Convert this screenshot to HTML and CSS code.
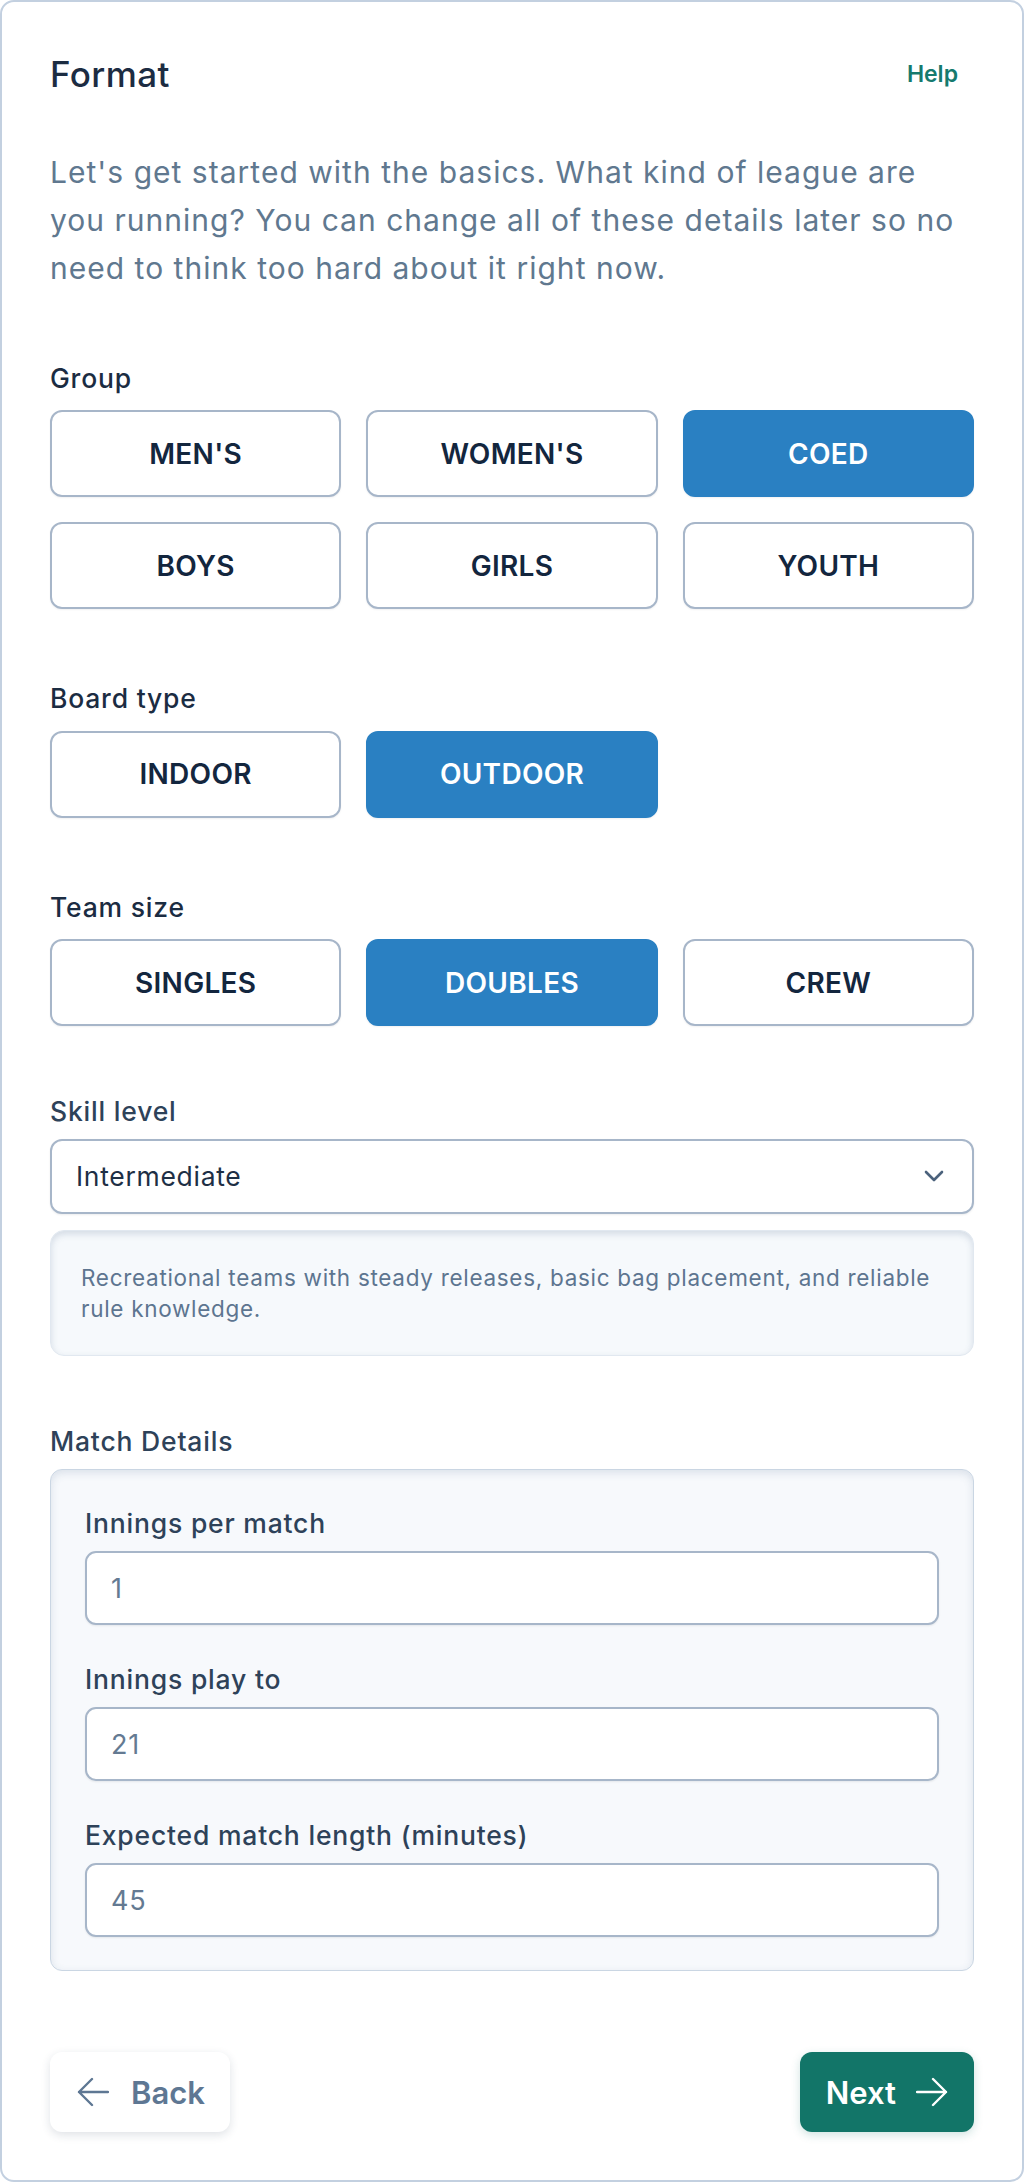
FILE: index.html
```html
<!DOCTYPE html>
<html lang="en">
<head>
<meta charset="utf-8">
<title>Format</title>
<link rel="stylesheet" href="styles.css">
</head>
<body>
<div class="card">
  <header class="head">
    <h1 class="title">Format</h1>
    <a class="help" href="#">Help</a>
  </header>
  <p class="intro">Let's get started with the basics. What kind of league are you running? You can change all of these details later so no need to think too hard about it right now.</p>

  <section class="field field-first">
    <div class="label">Group</div>
    <div class="choices">
      <button class="choice">Men's</button>
      <button class="choice">Women's</button>
      <button class="choice is-active">Coed</button>
      <button class="choice">Boys</button>
      <button class="choice">Girls</button>
      <button class="choice">Youth</button>
    </div>
  </section>

  <section class="field field-choice">
    <div class="label">Board type</div>
    <div class="choices">
      <button class="choice">Indoor</button>
      <button class="choice is-active">Outdoor</button>
    </div>
  </section>

  <section class="field field-choice">
    <div class="label">Team size</div>
    <div class="choices">
      <button class="choice">Singles</button>
      <button class="choice is-active">Doubles</button>
      <button class="choice">Crew</button>
    </div>
  </section>

  <section class="field field-form">
    <div class="label label-soft label-tight">Skill level</div>
    <div class="select">
      <span>Intermediate</span>
      <svg class="chevron" viewBox="0 0 20 12" width="20" height="12" aria-hidden="true"><polyline points="2,2 10,10 18,2" fill="none" stroke="#4b627c" stroke-width="2.6" stroke-linecap="round" stroke-linejoin="round"/></svg>
    </div>
    <div class="desc">Recreational teams with steady releases, basic bag placement, and reliable rule knowledge.</div>
  </section>

  <section class="field field-form">
    <div class="label label-soft label-tight">Match Details</div>
    <div class="panel">
      <label class="label label-soft label-tight">Innings per match</label>
      <input class="input" type="text" value="1">
      <label class="label label-soft label-tight label-gap">Innings play to</label>
      <input class="input" type="text" value="21">
      <label class="label label-soft label-tight label-gap">Expected match length (minutes)</label>
      <input class="input" type="text" value="45">
    </div>
  </section>

  <footer class="nav">
    <button class="back">
      <svg viewBox="0 0 32 30" width="32" height="30" aria-hidden="true"><path d="M15 2 L2 15 L15 28 M2 15 H31" fill="none" stroke="currentColor" stroke-width="2.4" stroke-linecap="round" stroke-linejoin="round"/></svg>
      <span>Back</span>
    </button>
    <button class="next">
      <span>Next</span>
      <svg viewBox="0 0 32 30" width="32" height="30" aria-hidden="true"><path d="M17 2 L30 15 L17 28 M30 15 H1" fill="none" stroke="currentColor" stroke-width="2.4" stroke-linecap="round" stroke-linejoin="round"/></svg>
    </button>
  </footer>
</div>
</body>
</html>
```

FILE: styles.css
```css
* {
  box-sizing: border-box;
  margin: 0;
  padding: 0;
}

html, body {
  background: #ffffff;
}

body {
  font-family: Inter, "Noto Sans", "Liberation Sans", sans-serif;
  color: #1c2c42;
}

.card {
  border: 2px solid #c3d0e0;
  border-radius: 14px;
  padding: 51px 48px 48px;
  background: #ffffff;
}

.head {
  display: flex;
  align-items: center;
  justify-content: space-between;
  height: 42px;
}

.title {
  font-size: 35px;
  line-height: 42px;
  font-weight: 500;
  letter-spacing: 0.4px;
  color: #1c2c42;
}

.help {
  font-size: 23px;
  line-height: 30px;
  font-weight: 600;
  color: #167a6e;
  text-decoration: none;
  padding: 6px 16px;
}

.intro {
  margin-top: 53px;
  font-size: 30px;
  line-height: 48px;
  letter-spacing: 1.02px;
  color: #60788f;
  max-width: 917px;
}

.field-first {
  margin-top: 67.5px;
}

.field-choice {
  margin-top: 71px;
}

.field-form {
  margin-top: 67px;
}

.label {
  display: block;
  font-size: 26.5px;
  line-height: 36px;
  font-weight: 500;
  letter-spacing: 0.8px;
  color: #1b2c42;
  margin-bottom: 14.5px;
}

.label-soft {
  color: #2e4259;
}

.label-tight {
  margin-bottom: 10px;
}

.label-gap {
  margin-top: 36px;
}

.choices {
  display: grid;
  grid-template-columns: repeat(3, 1fr);
  gap: 25px;
}

.choice {
  height: 87px;
  border: 2px solid #a7b6c9;
  border-radius: 12px;
  background: #ffffff;
  font-family: inherit;
  font-size: 28px;
  font-weight: 600;
  letter-spacing: 0.3px;
  text-transform: uppercase;
  color: #13263e;
  box-shadow: 0 1px 2px rgba(15, 23, 42, 0.06);
}

.choice.is-active {
  background: #2a80c2;
  border-color: #2a80c2;
  color: #ffffff;
}

.select {
  display: flex;
  align-items: center;
  justify-content: space-between;
  height: 74.5px;
  padding: 0 28px 0 24px;
  border: 2px solid #a7b6c9;
  border-radius: 12px;
  background: #ffffff;
  font-size: 26.5px;
  letter-spacing: 0.7px;
  color: #1e2f45;
  box-shadow: 0 1px 2px rgba(15, 23, 42, 0.08);
}

.desc {
  margin-top: 16.5px;
  padding: 31px 30px;
  background: #f6f9fc;
  border: 1px solid #e1e8f0;
  border-radius: 14px;
  box-shadow: inset 0 3px 7px rgba(71, 100, 135, 0.2);
  font-size: 22.5px;
  line-height: 31px;
  letter-spacing: 0.7px;
  color: #5d7590;
}

.panel {
  padding: 35px 34px 33px;
  background: #f7f9fc;
  border: 1px solid #cad6e3;
  border-radius: 12px;
  box-shadow: inset 0 3px 8px rgba(71, 100, 135, 0.16);
}

.input {
  display: block;
  width: 100%;
  height: 74px;
  padding: 0 24px;
  border: 2px solid #a7b6c9;
  border-radius: 11px;
  background: #ffffff;
  font-family: inherit;
  font-size: 27px;
  letter-spacing: 0.7px;
  color: #647a92;
  box-shadow: 0 1px 2px rgba(15, 23, 42, 0.08);
  outline: none;
}

.nav {
  margin-top: 81px;
  display: flex;
  justify-content: space-between;
  align-items: center;
}

.back,
.next {
  display: flex;
  align-items: center;
  height: 80px;
  border: none;
  border-radius: 12px;
  font-family: inherit;
  font-size: 31px;
  font-weight: 600;
}

.back {
  gap: 22px;
  padding: 0 25px 0 27px;
  background: #ffffff;
  color: #5e7793;
  box-shadow: 0 3px 10px rgba(30, 50, 80, 0.14);
}

.next {
  gap: 20px;
  padding: 0 26px;
  background: #127568;
  color: #ffffff;
  box-shadow: 0 3px 10px rgba(18, 117, 104, 0.2);
}
```
